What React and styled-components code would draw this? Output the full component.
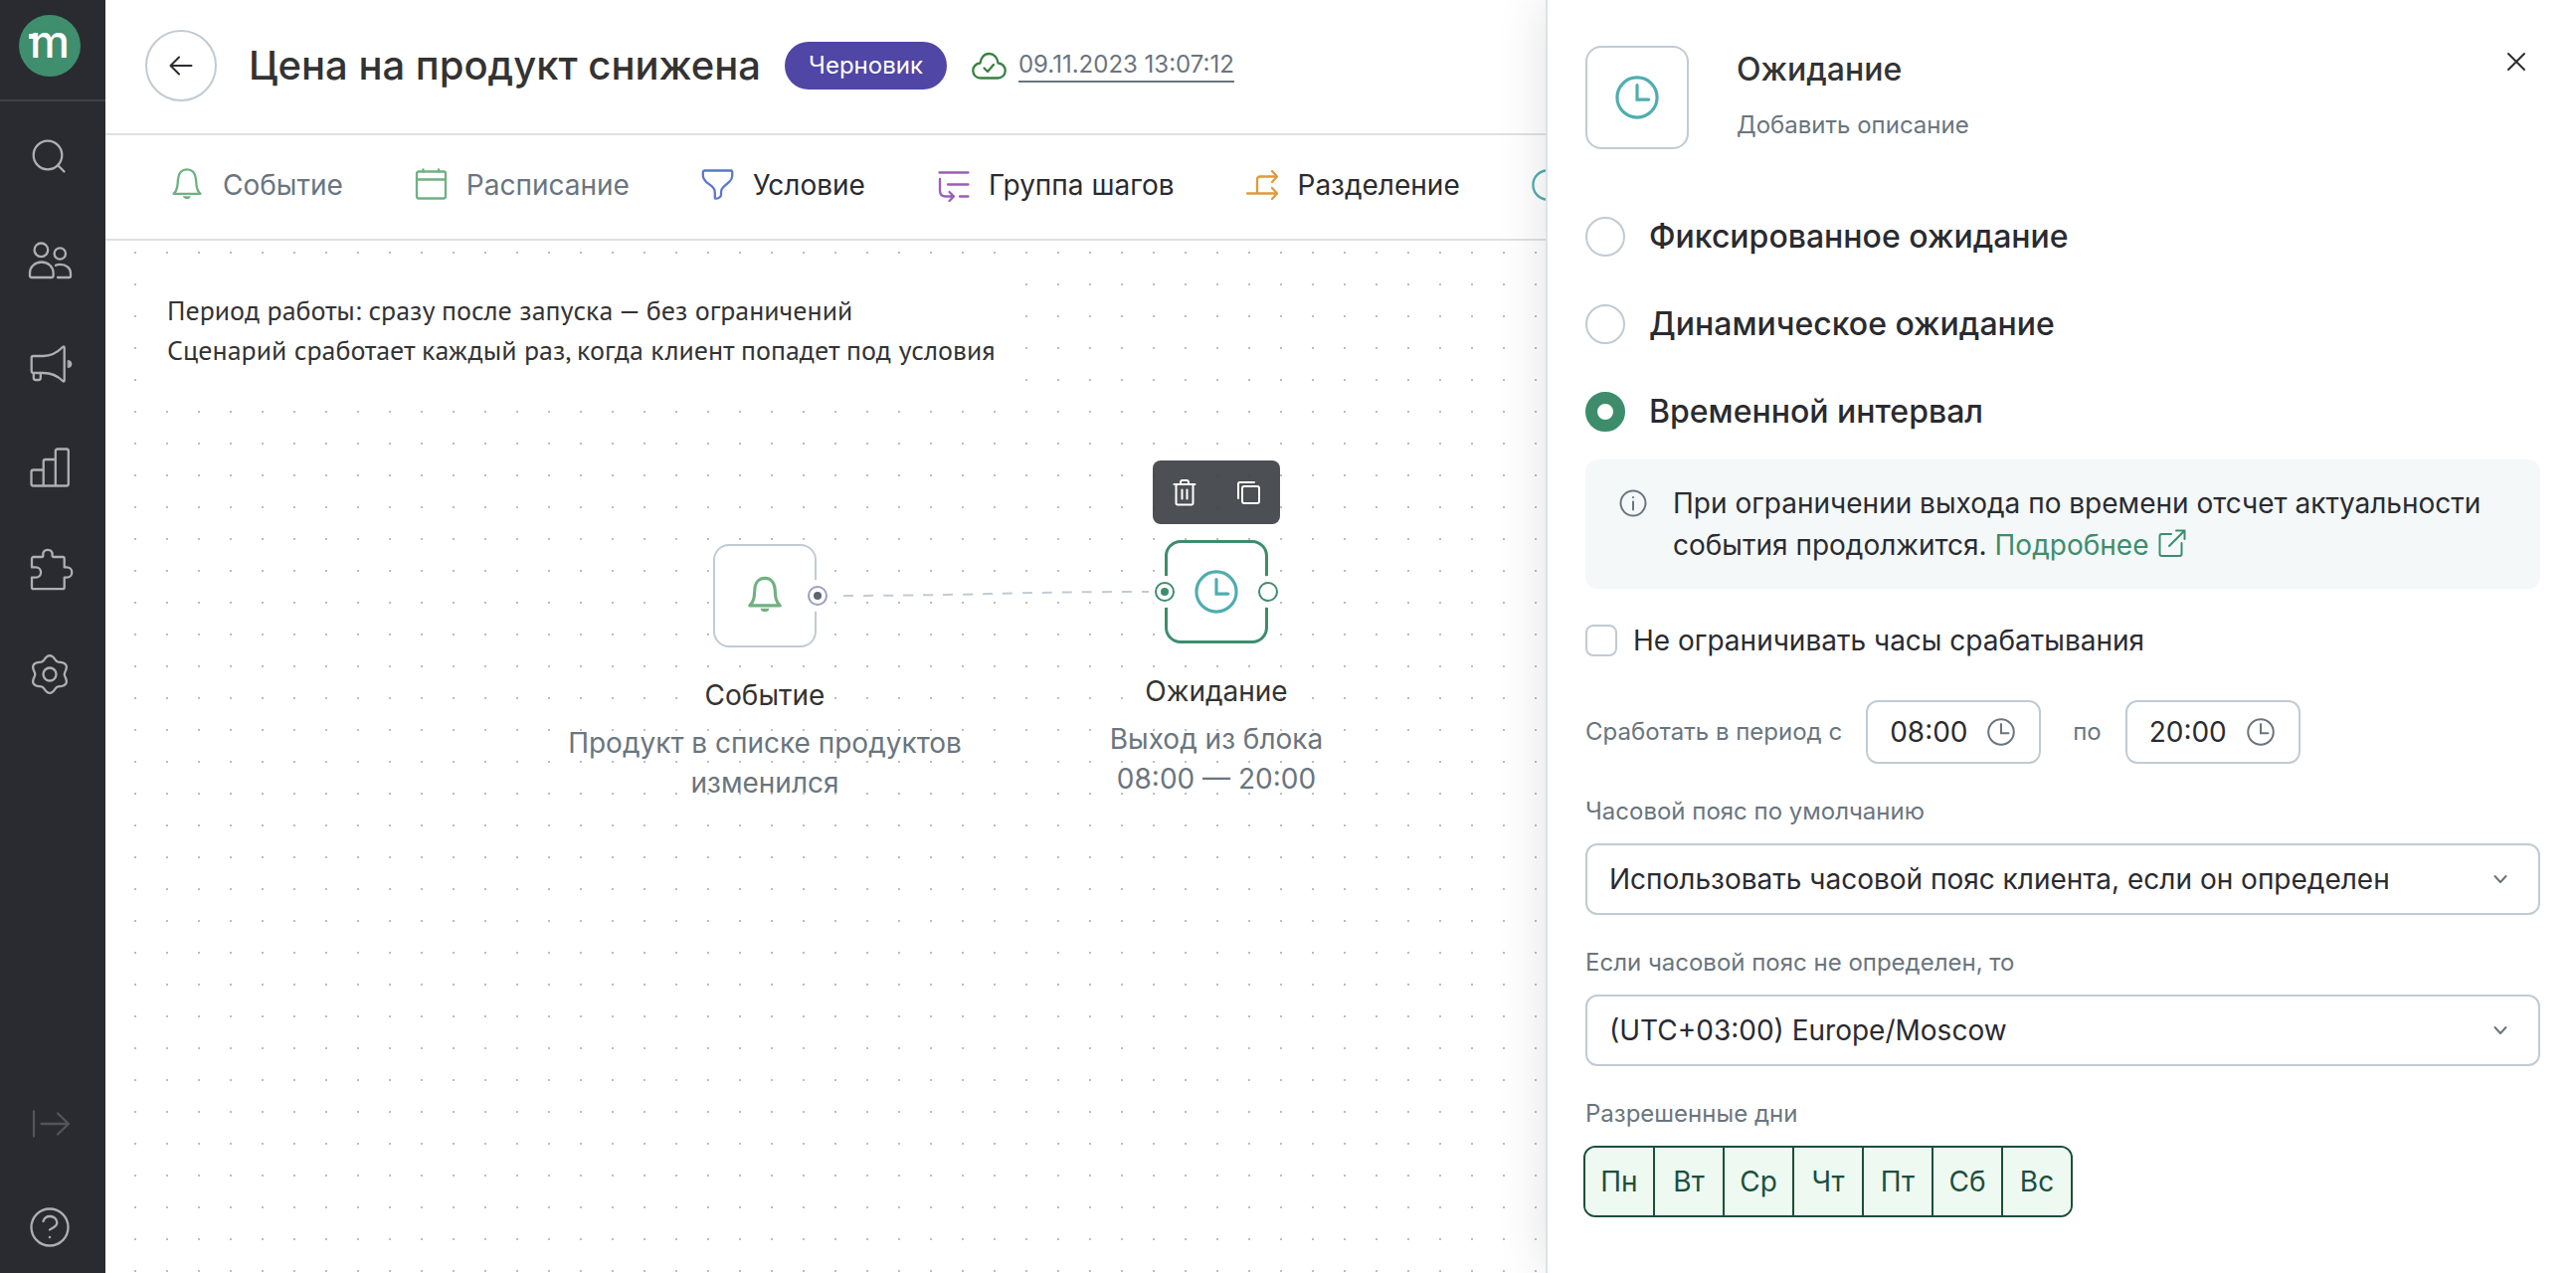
import React, { useState } from 'react';
import styled, { createGlobalStyle } from 'styled-components';

const green = '#3d8d6c';
const darkGreen = '#1c4f3c';
const teal = '#4fadb0';
const bellGreen = '#6fb181';
const lineColor = '#dce2e7';
const borderColor = '#c0cbd4';
const textColor = '#2a2b30';
const greyText = '#6a757e';

const GlobalStyle = createGlobalStyle`
  * {
    box-sizing: border-box;
  }
  body {
    margin: 0;
    background: #fff;
    color: ${textColor};
    font-family: Inter, sans-serif;
    font-size: 28px;
    line-height: 40px;
  }
  button, input, select {
    font: inherit;
    color: inherit;
  }
  button {
    padding: 0;
    border: 0;
    background: none;
    cursor: pointer;
  }
`;

const Page = styled.div`
  display: flex;
  min-height: 100vh;
`;

const Sidebar = styled.aside`
  display: flex;
  flex-direction: column;
  width: 106px;
  flex: none;
  background: #2a2b30;
`;

const LogoLink = styled.a`
  display: block;
  height: 102px;
  padding: 14px 18px;
  border-bottom: 2px solid #404146;
`;

const Nav = styled.nav`
  display: flex;
  flex-direction: column;
  gap: 40px;
  padding: 24px 6px 14px 0;
  margin-top: ${props => props.bottom ? 'auto' : '0'};
`;

const NavButton = styled.button`
  display: flex;
  align-items: center;
  justify-content: center;
  height: 64px;
  color: ${props => props.muted ? '#54555a' : '#aeafb1'};
`;

const Main = styled.main`
  display: flex;
  flex-direction: column;
  flex: 1;
  min-width: 0;
  overflow: hidden;
`;

const Header = styled.header`
  display: flex;
  align-items: center;
  gap: 24px;
  padding: 30px 40px 32px;
  border-bottom: 2px solid ${lineColor};
  white-space: nowrap;
`;

const BackButton = styled.button`
  display: flex;
  align-items: center;
  justify-content: center;
  flex: none;
  width: 72px;
  height: 72px;
  margin-right: 8px;
  border: 2px solid ${borderColor};
  border-radius: 50%;
`;

const Title = styled.h1`
  margin: 0;
  color: #333;
  font-size: 40px;
  line-height: 48px;
  font-weight: 500;
`;

const Badge = styled.span`
  padding: 8px 24px;
  border-radius: 24px;
  background: #4f46a6;
  color: #fff;
  font-size: 24px;
  line-height: 32px;
`;

const Saved = styled.div`
  display: flex;
  align-items: center;
  gap: 12px;
`;

const SavedLink = styled.a`
  border-bottom: 2px solid ${greyText};
  color: ${greyText};
  font-size: 24px;
  line-height: 32px;
  text-decoration: none;
`;

const Toolbar = styled.div`
  display: flex;
  gap: 72px;
  padding: 30px 66px 34px;
  border-bottom: 2px solid ${lineColor};
`;

const ToolButton = styled.button`
  display: flex;
  align-items: center;
  gap: 20px;
  flex: none;
  color: ${props => props.muted ? greyText : textColor};
`;

const Canvas = styled.section`
  position: relative;
  flex: 1;
  padding: 28px 46px;
  background: radial-gradient(circle at 1px 1px, #bdbdbd 1px, transparent 1px) 29px 11px / 32px 32px;
`;

const Note = styled.div`
  width: fit-content;
  padding: 22px 16px 24px;
  background: #fff;
  color: #333;
  font-family: "PT Sans", "Noto Sans", sans-serif;
  font-size: 28px;
`;

const Link = styled.svg`
  position: absolute;
  left: 722px;
  top: 345px;
`;

const Node = styled.div`
  position: absolute;
  left: ${props => props.x}px;
  top: ${props => props.y}px;
  display: flex;
  flex-direction: column;
  align-items: center;
  width: 400px;
  text-align: center;
`;

const NodeBox = styled.div`
  position: relative;
  display: flex;
  align-items: center;
  justify-content: center;
  flex: none;
  width: 104px;
  height: 104px;
  border: ${props => props.active ? '3px' : '2px'} solid ${props => props.active ? green : borderColor};
  border-radius: 16px;
  background: #fff;
`;

const Port = styled.svg`
  position: absolute;
  top: 50%;
  ${props => props.side}: 0;
  transform: translate(${props => props.side === 'left' ? '-19px' : '19px'}, -16px);
`;

const NodeTitle = styled.div`
  margin: 28px 0 8px;
  color: #333;
`;

const NodeLine = styled.div`
  color: ${greyText};
  white-space: nowrap;
`;

const NodeMenu = styled.div`
  position: absolute;
  top: -80px;
  display: flex;
  width: 128px;
  height: 64px;
  border-radius: 8px;
  background: rgba(61, 64, 68, 0.92);
  color: #fff;
`;

const MenuButton = styled.button`
  display: flex;
  align-items: center;
  justify-content: center;
  flex: 1;
`;

const Panel = styled.aside`
  position: relative;
  width: 40%;
  flex: none;
  padding: 46px 36px 56px 38px;
  border-left: 2px solid ${lineColor};
  background: #fff;
  box-shadow: 0 0 48px rgba(0, 0, 0, 0.12);
`;

const PanelHead = styled.div`
  display: flex;
  align-items: flex-start;
  gap: 48px;
  margin-bottom: 68px;
`;

const PanelTitle = styled.h2`
  margin: 4px 0 20px;
  color: #333;
  font-size: 32px;
  line-height: 40px;
  font-weight: 500;
`;

const Describe = styled.button`
  display: block;
  color: ${greyText};
  font-size: 24px;
  line-height: 32px;
`;

const CloseButton = styled.button`
  display: flex;
  margin-left: auto;
  padding: 6px 14px;
`;

const RadioList = styled.div`
  display: flex;
  flex-direction: column;
  gap: 48px;
  margin-bottom: 28px;
`;

const RadioLabel = styled.label`
  display: flex;
  align-items: center;
  gap: 24px;
  font-size: 32px;
  font-weight: 500;
`;

const Radio = styled.input`
  appearance: none;
  width: 40px;
  height: 40px;
  margin: 0;
  border: 2px solid ${borderColor};
  border-radius: 50%;
  background: #fff;
  &:checked {
    border: 12px solid ${green};
  }
`;

const Info = styled.div`
  display: flex;
  gap: 26px;
  padding: 23px 32px 23px 34px;
  border-radius: 12px;
  background: #f4f8f9;
  line-height: 42px;
  > svg {
    flex: none;
    margin-top: 7px;
  }
`;

const InfoLink = styled.a`
  color: ${green};
  text-decoration: none;
  white-space: nowrap;
  svg {
    margin-left: 10px;
    vertical-align: -2px;
  }
`;

const CheckLabel = styled.label`
  display: flex;
  align-items: center;
  gap: 16px;
  margin: 32px 0 40px;
`;

const Checkbox = styled.input`
  appearance: none;
  width: 32px;
  height: 32px;
  margin: 0;
  border: 2px solid ${borderColor};
  border-radius: 8px;
  &:checked {
    background: ${green};
  }
`;

const Period = styled.div`
  display: flex;
  align-items: center;
  gap: 24px;
  margin-bottom: 32px;
`;

const Label = styled.label`
  color: ${greyText};
  font-size: 24px;
  line-height: 32px;
`;

const TimeField = styled.div`
  display: flex;
  align-items: center;
  width: 176px;
  height: 64px;
  padding: 0 24px 0 22px;
  border: 2px solid ${borderColor};
  border-radius: 12px;
  & + ${Label} {
    margin-left: 8px;
  }
`;

const TimeInput = styled.input`
  flex: 1;
  min-width: 0;
  padding: 0;
  border: 0;
  outline: none;
  background: none;
`;

const Field = styled.div`
  display: flex;
  flex-direction: column;
  gap: 16px;
  & + & {
    margin-top: 32px;
  }
`;

const SelectBox = styled.div`
  display: grid;
  align-items: center;
  > * {
    grid-area: 1 / 1;
  }
  > svg {
    justify-self: end;
    margin-right: 32px;
    pointer-events: none;
  }
`;

const Select = styled.select`
  appearance: none;
  width: 100%;
  height: 72px;
  padding: 0 64px 0 22px;
  border: 2px solid ${borderColor};
  border-radius: 12px;
  background: #fff;
`;

const Days = styled.div`
  display: flex;
  width: fit-content;
  margin-left: -2px;
  border: 2px solid ${darkGreen};
  border-radius: 12px;
  overflow: hidden;
`;

const Day = styled.button`
  width: 68px;
  height: 68px;
  background: ${props => props['aria-pressed'] ? '#eef9f1' : '#fff'};
  color: ${darkGreen};
  & + & {
    width: 70px;
    border-left: 2px solid ${darkGreen};
  }
`;

const Icon = ({ size = 32, box = size, width = 2, color = 'currentColor', children }) => (
  <svg
    width={size}
    height={size}
    viewBox={`0 0 ${box} ${box}`}
    fill="none"
    stroke={color}
    strokeWidth={width}
    strokeLinecap="round"
    strokeLinejoin="round"
    overflow="visible"
    aria-hidden="true"
  >
    {children}
  </svg>
);

const Logo = () => (
  <svg width="64" height="64" viewBox="0 0 64 64" aria-hidden="true">
    <circle cx="32" cy="32" r="31" fill="#3f8e6d" />
    <rect x="11" y="20" width="6" height="5" fill="#fff" />
    <text x="12" y="44" fill="#fff" fontFamily="Inter, sans-serif" fontSize="45" fontWeight="500">m</text>
  </svg>
);

// six soft teeth around the centre of a 44px box
const gearPoints = Array.from({ length: 120 }, (_, i) => {
  const a = i * Math.PI / 60;
  const r = 16.8 + 2 * Math.cos(6 * (a - Math.PI / 2));
  return `${(22 + r * Math.cos(a)).toFixed(2)},${(22 + r * Math.sin(a)).toFixed(2)}`;
}).join(' ');

const navIcons = {
  search: <><circle cx="20" cy="20" r="14.3" /><path d="M30.5 30.5l6 6" /></>,
  clients: <>
    <circle cx="13.4" cy="11.3" r="6.8" />
    <path d="M2 37v-2.5c0-6 5-11 11.8-11s11.8 5 11.8 11V37a2 2 0 0 1-2 2H4a2 2 0 0 1-2-2z" />
    <circle cx="32.3" cy="15" r="5.7" />
    <path d="M28 26.8c1.2-.7 2.8-1 4.5-1 6 0 10.5 4 10.5 9.2v2.5a1.5 1.5 0 0 1-1.5 1.5H30" />
  </>,
  campaigns: <>
    <path d="M5.5 14h10C24 14 31 9 35 5q1.7-1.5 1.7.8v32.4q0 2.3-1.7.8C31 35 24 31 15.5 31h-10a1.8 1.8 0 0 1-1.8-1.8V15.8A1.8 1.8 0 0 1 5.5 14z" />
    <path d="M5.8 31v5a2 2 0 0 0 2 2h3a2 2 0 0 0 2-2v-5" />
    <path d="M40.5 18.5a3.5 3.5 0 0 1 0 7z" fill="currentColor" strokeWidth="1" />
  </>,
  reports: (
    <path d="M15.7 24.5H5.5a2 2 0 0 0-2 2v12a2 2 0 0 0 2 2h33.3a2 2 0 0 0 2-2v-33a2 2 0 0 0-2-2h-9a2 2 0 0 0-2 2v35M15.7 40.5V16a2 2 0 0 1 2-2h10" />
  ),
  integrations: (
    <path d="M4 9.7A1.7 1.7 0 0 1 5.7 8H14q1.5 0 1.3-1.5C14.8 3 17 .8 20 .8S25 3 24.6 6.5Q24.500 8 26 8h9a1.7 1.7 0 0 1 1.7 1.7v8.7h2.5a5 5 0 0 1 0 10.2h-2.500v9.9a1.7 1.7 0 0 1-1.7 1.7H5.7A1.7 1.7 0 0 1 4 38.5v-9.900h4a5 5 0 0 0 0-10.2H4z" />
  ),
  settings: <><polygon points={gearPoints} /><circle cx="22" cy="22" r="6.5" /></>,
  expand: <path d="M6 9.5v25M13.5 22H41M30 11.5L41 22 30 32.5" />,
  help: <>
    <circle cx="22" cy="22" r="18.5" />
    <path d="M15.5 16c1-3.2 3.5-5 6.8-5 4 0 7 2.7 7 6.3 0 4.7-5 5.2-7.3 7.2M22 32v.2" />
  </>,
};

const Bell = ({ size = 32, width = 2.3 }) => (
  <Icon size={size} box={32} width={width} color={bellGreen}>
    <path d="M2.5 24.8C6.5 21 6.5 17 7 10 7.5 4 11 .3 16 .3S24.5 4 25 10c.5 7 .5 11 4.5 14.8z" />
    <path d="M12.7 27.8h6.6a3.4 2.6 0 0 1-6.6 0z" fill={bellGreen} strokeWidth="1" />
  </Icon>
);

const Clock = ({ size = 32, width = 2.3, color = teal }) => (
  <Icon size={size} box={32} width={width} color={color}>
    <circle cx="16" cy="16" r="14.6" />
    <path d="M16 7v10.5h8.5" strokeLinejoin="miter" />
  </Icon>
);

const tools = [
  { name: 'Событие', muted: true, icon: <Bell /> },
  { name: 'Расписание', muted: true, icon: (
    <Icon width={2.3} color={bellGreen}>
      <rect x="2" y="2.5" width="29" height="27" rx="2" />
      <path d="M2 10.5h29M8.5 2.5v-2M24 2.5v-2" />
    </Icon>
  ) },
  { name: 'Условие', icon: (
    <Icon width={2.3} color="#5b78cc">
      <path d="M3.5 1.5h26a1.7 1.7 0 0 1 1.7 1.7V7c0 2.5-1 4-3 5.8l-5.5 4.9c-1.9 1.7-2.7 3.3-2.7 5.8V26c0 2-3 3.7-5 3.7-.8 0-1.2-.5-1.2-1.5v-4.7c0-2.5-.8-4.1-2.7-5.8L5 12.8C3 11 1.8 9.5 1.8 7V3.2a1.7 1.7 0 0 1 1.7-1.7z" />
    </Icon>
  ) },
  { name: 'Группа шагов', icon: (
    <Icon width={2.3} color="#9a5fb5">
      <path d="M2.5 3.5h29M11 15.5h20.5M23 27.5h8.5M3 10v11.5c0 4 2 6 6 6h8M12.5 23l4.5 4.5-4.5 4.5" />
    </Icon>
  ) },
  { name: 'Разделение', icon: (
    <Icon width={2.3} color="#e09b3b">
      <path d="M1 24.5h30M26 19l5 5.500-5 5.500M11 24.5v-14a3 3 0 0 1 3-3h17M26 2l5 5.500-5 5.500" />
    </Icon>
  ) },
  { name: 'Ожидание', iconOnly: true, icon: <Clock /> },
];

const PortMark = ({ side, ring, dot }) => (
  <Port side={side} width="32" height="32" viewBox="0 0 32 32" aria-hidden="true">
    <circle cx="16" cy="16" r="16" fill="#fff" />
    <circle cx="16" cy="16" r="9" fill="#fff" stroke={ring} strokeWidth="2" />
    {dot && <circle cx="16" cy="16" r="4" fill={dot} />}
  </Port>
);

const Chevron = () => (
  <Icon size={16} color={greyText}>
    <path d="M2.5 5L8 11l5.5-6" />
  </Icon>
);

const SelectField = ({ id, label, options }) => (
  <Field>
    <Label htmlFor={id}>{label}</Label>
    <SelectBox>
      <Select id={id}>
        {options.map(option => <option key={option}>{option}</option>)}
      </Select>
      <Chevron />
    </SelectBox>
  </Field>
);

const Time = ({ id, label, value }) => <>
  <Label htmlFor={id}>{label}</Label>
  <TimeField>
    <TimeInput id={id} type="text" defaultValue={value} />
    <Clock size={28} color={greyText} />
  </TimeField>
</>;

const modes = ['Фиксированное ожидание', 'Динамическое ожидание', 'Временной интервал'];
const weekDays = ['Пн', 'Вт', 'Ср', 'Чт', 'Пт', 'Сб', 'Вс'];

const navItem = (name, label, muted) => (
  <NavButton key={name} type="button" aria-label={label} muted={muted ? 1 : undefined}>
    <Icon size={44} width={2.3}>{navIcons[name]}</Icon>
  </NavButton>
);

const SettingsPanel = () => {
  const [mode, setMode] = useState(modes[2]);
  const [days, setDays] = useState(weekDays);
  const toggleDay = day =>
    setDays(days.includes(day) ? days.filter(d => d !== day) : [...days, day]);

  return (
    <Panel>
      <PanelHead>
        <NodeBox><Clock size={44} /></NodeBox>
        <div>
          <PanelTitle>Ожидание</PanelTitle>
          <Describe type="button">Добавить описание</Describe>
        </div>
        <CloseButton type="button" aria-label="Закрыть">
          <Icon size={20} color={textColor}><path d="M2 2l16 16M18 2L2 18" /></Icon>
        </CloseButton>
      </PanelHead>
      <RadioList>
        {modes.map(name => (
          <RadioLabel key={name}>
            <Radio type="radio" name="mode" checked={mode === name} onChange={() => setMode(name)} />
            {name}
          </RadioLabel>
        ))}
      </RadioList>
      <Info>
        <Icon size={28} color={greyText}>
          <circle cx="14" cy="14" r="12.5" />
          <path d="M14 12.5v8M14 8v.2" />
        </Icon>
        <span>
          При ограничении выхода по времени отсчет актуальности события продолжится.{' '}
          <InfoLink href="#more">
            Подробнее
            <Icon size={28} color={green}>
              <path d="M13 5H3.5a2 2 0 0 0-2 2v18a2 2 0 0 0 2 2h18a2 2 0 0 0 2-2V14M11 17L26.5 1.5M18 1.5h8.5V10" />
            </Icon>
          </InfoLink>
        </span>
      </Info>
      <CheckLabel>
        <Checkbox type="checkbox" />
        Не ограничивать часы срабатывания
      </CheckLabel>
      <Period>
        <Time id="from" label="Сработать в период с" value="08:00" />
        <Time id="to" label="по" value="20:00" />
      </Period>
      <SelectField
        id="zone"
        label="Часовой пояс по умолчанию"
        options={['Использовать часовой пояс клиента, если он определен']}
      />
      <SelectField
        id="fallback-zone"
        label="Если часовой пояс не определен, то"
        options={['(UTC+03:00) Europe/Moscow']}
      />
      <Field>
        <Label as="div" id="days-label">Разрешенные дни</Label>
        <Days role="group" aria-labelledby="days-label">
          {weekDays.map(day => (
            <Day key={day} type="button" aria-pressed={days.includes(day)} onClick={() => toggleDay(day)}>
              {day}
            </Day>
          ))}
        </Days>
      </Field>
    </Panel>
  );
};

const App = () => (
  <Page>
    <GlobalStyle />
    <Sidebar>
      <LogoLink href="#home" aria-label="Главная"><Logo /></LogoLink>
      <Nav>
        {navItem('search', 'Поиск')}
        {navItem('clients', 'Клиенты')}
        {navItem('campaigns', 'Кампании')}
        {navItem('reports', 'Отчеты')}
        {navItem('integrations', 'Интеграции')}
        {navItem('settings', 'Настройки')}
      </Nav>
      <Nav bottom="true">
        {navItem('expand', 'Развернуть меню', true)}
        {navItem('help', 'Помощь')}
      </Nav>
    </Sidebar>
    <Main>
      <Header>
        <BackButton type="button" aria-label="Назад">
          <Icon size={24} color={textColor}><path d="M22.5 12h-21M10 3.5L1.5 12l8.5 8.5" /></Icon>
        </BackButton>
        <Title>Цена на продукт снижена</Title>
        <Badge>Черновик</Badge>
        <Saved>
          <Icon size={36} width={2.3} color="#38803f">
            <path d="M10 30.5a7.5 7.5 0 0 1-.5-15C10 10 13.5 6 18.5 6s8.5 4 9 9.5a7.5 7.5 0 0 1-.5 15z" />
            <path d="M13.5 20.5l3.5 3.5 6-7" />
          </Icon>
          <SavedLink href="#history">09.11.2023 13:07:12</SavedLink>
        </Saved>
      </Header>
      <Toolbar>
        {tools.map(tool => (
          <ToolButton key={tool.name} type="button" aria-label={tool.name} muted={tool.muted ? 1 : undefined}>
            {tool.icon}
            {!tool.iconOnly && tool.name}
          </ToolButton>
        ))}
      </Toolbar>
      <Canvas>
        <Note>
          Период работы: сразу после запуска — без ограничений<br />
          Сценарий сработает каждый раз, когда клиент попадет под условия
        </Note>
        <Link width="336" height="20" fill="none" aria-hidden="true">
          <path d="M0 12C168 12 168 8 336 8" stroke={borderColor} strokeWidth="2" strokeDasharray="10 10" />
        </Link>
        <Node x={463} y={305}>
          <NodeBox>
            <Bell size={36} width={2.8} />
            <PortMark side="right" ring="#9a9fc0" dot="#5d6670" />
          </NodeBox>
          <NodeTitle>Событие</NodeTitle>
          <NodeLine>Продукт в списке продуктов</NodeLine>
          <NodeLine>изменился</NodeLine>
        </Node>
        <Node x={917} y={301}>
          <NodeMenu>
            <MenuButton type="button" aria-label="Удалить">
              <Icon size={28}>
                <path d="M3.5 6h21M5.5 6v19A1.500 1.500 0 0 0 7 26.500h14a1.500 1.500 0 0 0 1.500-1.500V6M10 6V4a2 2 0 0 1 2-2h4a2 2 0 0 1 2 2v2M11.5 11.500v9M16.5 11.500v9" />
              </Icon>
            </MenuButton>
            <MenuButton type="button" aria-label="Копировать">
              <Icon size={28}>
                <rect x="8" y="8" width="17" height="17" rx="2" />
                <path d="M4 20V5.5A1.5 1.5 0 0 1 5.5 4H20" />
              </Icon>
            </MenuButton>
          </NodeMenu>
          <NodeBox active="true">
            <PortMark side="left" ring={green} dot={green} />
            <Clock size={44} />
            <PortMark side="right" ring={green} />
          </NodeBox>
          <NodeTitle>Ожидание</NodeTitle>
          <NodeLine>Выход из блока</NodeLine>
          <NodeLine>08:00 — 20:00</NodeLine>
        </Node>
      </Canvas>
    </Main>
    <SettingsPanel />
  </Page>
);

export default App;
